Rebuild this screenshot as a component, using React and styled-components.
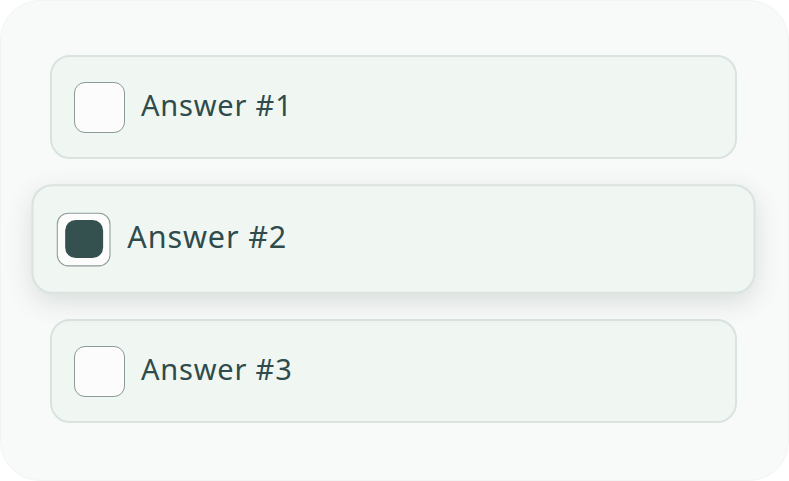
import React, { useState } from 'react'
import styled, { createGlobalStyle } from 'styled-components';

const GlobalStyle = createGlobalStyle`
  html, body {
    margin: 0;
    padding: 0;
    background: #ffffff;
  }
`;

const Panel = styled.div`
  box-sizing: border-box;
  width: 789px;
  height: 481px;
  padding: 54px 51px 56px 49px;
  background: #f8faf9;
  border: 1px solid #f1f4f3;
  border-radius: 40px;
  display: flex;
  flex-direction: column;
  gap: 28px;
  font-family: "Noto Sans", sans-serif;
`;

const Option = styled.div`
  box-sizing: border-box;
  height: 104px;
  display: flex;
  align-items: center;
  gap: 16px;
  padding: 0 22px;
  background: #f0f7f3;
  border: 2px solid #d9e3df;
  border-radius: 20px;
  transform: ${props => (props.selected ? 'scale(1.054)' : 'none')};
  box-shadow: ${props => (props.selected ? '0 8px 24px rgba(40, 60, 55, 0.15)' : 'none')};
  cursor: pointer;
`;

const Box = styled.div`
  box-sizing: border-box;
  flex-shrink: 0;
  width: 51px;
  height: 51px;
  border: 1.5px solid #8c9b98;
  border-radius: 11px;
  background: #fbfcfb;
  display: flex;
  align-items: center;
  justify-content: center;
`;

const Fill = styled.div`
  width: 36px;
  height: 36px;
  border-radius: 10px;
  background: #34504f;
`;

const Label = styled.span`
  font-size: 29px;
  line-height: 1;
  padding-bottom: 5px;
  letter-spacing: 0.8px;
  color: #2f4b4b;
`;

const answers = ['Answer #1', 'Answer #2', 'Answer #3'];

const App = () => {
  const [picked, setPicked] = useState(1);

  return (
    <>
      <GlobalStyle />
      <Panel>
        {answers.map((a, i) => (
          <Option key={a} selected={i === picked} onClick={() => setPicked(i)}>
            <Box>{i === picked && <Fill />}</Box>
            <Label>{a}</Label>
          </Option>
        ))}
      </Panel>
    </>
  )
}

export default App
